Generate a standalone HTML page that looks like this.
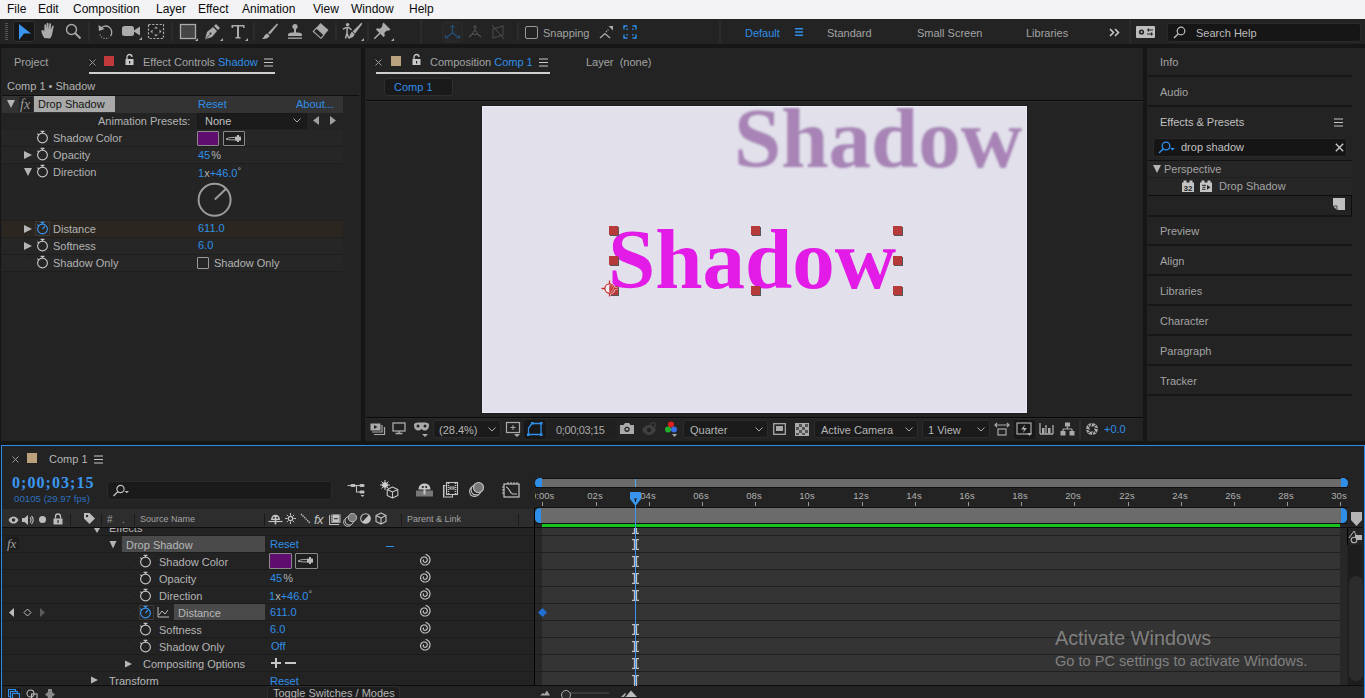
<!DOCTYPE html>
<html><head><meta charset="utf-8">
<style>
*{margin:0;padding:0;box-sizing:border-box}
html,body{width:1365px;height:698px;overflow:hidden;background:#161616;font-family:"Liberation Sans",sans-serif;font-size:11px;color:#a3a3a3;position:relative}
.a{position:absolute}
.t{position:absolute;white-space:nowrap;line-height:1}
.b{color:#2f8fe8}
.sep{position:absolute;width:1px;background:#333}
svg{position:absolute;overflow:visible}
</style></head><body>
<!-- MENU BAR -->
<div class="a" style="left:0;top:0;width:1365px;height:19px;background:#f3f3f5"></div>
<div class="t" style="left:7px;top:3px;font-size:12px;color:#0a0a0a">File</div>
<div class="t" style="left:38px;top:3px;font-size:12px;color:#0a0a0a">Edit</div>
<div class="t" style="left:73px;top:3px;font-size:12px;color:#0a0a0a">Composition</div>
<div class="t" style="left:156px;top:3px;font-size:12px;color:#0a0a0a">Layer</div>
<div class="t" style="left:198px;top:3px;font-size:12px;color:#0a0a0a">Effect</div>
<div class="t" style="left:242px;top:3px;font-size:12px;color:#0a0a0a">Animation</div>
<div class="t" style="left:313px;top:3px;font-size:12px;color:#0a0a0a">View</div>
<div class="t" style="left:351px;top:3px;font-size:12px;color:#0a0a0a">Window</div>
<div class="t" style="left:409px;top:3px;font-size:12px;color:#0a0a0a">Help</div>
<!-- TOOLBAR -->
<div class="a" style="left:0;top:19px;width:1365px;height:25px;background:#232323"></div>
<!-- grip -->
<div class="a" style="left:5px;top:23px;width:3px;height:18px;background:repeating-linear-gradient(#555 0 1px,transparent 1px 2px)"></div>
<!-- selection tool active -->
<div class="a" style="left:13px;top:21px;width:22px;height:21px;background:#171717;border:1px solid #313131;border-radius:3px"></div>
<svg style="left:0;top:0" width="1" height="1"></svg>
<svg class="ic" style="left:18px;top:23px" width="14" height="18" viewBox="0 0 14 18"><path d="M1 1 L13 10.5 L6 10.5 L1 17 Z" fill="#3a95ef"/></svg>
<!-- hand -->
<svg style="left:40px;top:22px" width="18" height="18" viewBox="0 0 17 17"><path d="M4 15 C2 12 1 9 1.5 8 C2 7.2 3.2 7.6 4 9 L4.2 3 C4.2 1.8 5.8 1.8 5.8 3 L6 7 L6.3 1.5 C6.3 0.3 8 0.3 8 1.5 L8.2 7 L8.8 2 C8.9 0.9 10.5 1 10.4 2.2 L10.2 7.5 L11.4 4 C11.7 3 13.1 3.3 12.9 4.4 L11.8 10 C11.3 13 10.5 14.5 9.5 15.5 Z" fill="#ababab"/></svg>
<!-- zoom -->
<svg style="left:65px;top:23px" width="17" height="17" viewBox="0 0 17 17"><circle cx="6.5" cy="6.5" r="5" fill="none" stroke="#ababab" stroke-width="1.4"/><path d="M10 10 L15.5 15.5" stroke="#ababab" stroke-width="1.8"/></svg>
<div class="sep" style="left:88px;top:22px;width:2px;height:19px;background:#2c2c2c"></div>
<!-- rotate -->
<svg style="left:97px;top:23px" width="17" height="17" viewBox="0 0 17 17"><path d="M3.5 5.5 A6 6 0 1 1 13.5 13" fill="none" stroke="#ababab" stroke-width="1.3"/><path d="M1.5 2 L2 8 L7.5 6 Z" fill="#ababab"/><path d="M3 11.5 A6 6 0 0 0 12 14.5" fill="none" stroke="#ababab" stroke-width="1.2" stroke-dasharray="1 1.6"/></svg>
<!-- camera -->
<svg style="left:121px;top:23px" width="21" height="18" viewBox="0 0 21 18"><rect x="1" y="3" width="12" height="10" rx="2.5" fill="#ababab"/><path d="M12 8 L19 3.5 L19 12.5 Z" fill="#ababab"/><path d="M18 17 L21 14 L21 17 Z" fill="#ababab"/></svg>
<!-- pan behind -->
<svg style="left:147px;top:23px" width="18" height="17" viewBox="0 0 18 17"><rect x="1.5" y="1.5" width="15" height="14" fill="none" stroke="#ababab" stroke-width="1.2" stroke-dasharray="2.2 1.5"/><path d="M9 3.5 L11 5.5 L7 5.5 Z M9 13.5 L11 11.5 L7 11.5 Z M3.5 8.5 L5.5 6.5 L5.5 10.5 Z M14.5 8.5 L12.5 6.5 L12.5 10.5 Z" fill="#ababab"/></svg>
<div class="sep" style="left:171px;top:22px;width:2px;height:19px;background:#2c2c2c"></div>
<!-- rect -->
<svg style="left:179px;top:23px" width="19" height="18" viewBox="0 0 19 18"><rect x="1.5" y="1.5" width="15" height="14" fill="#454545" stroke="#ababab" stroke-width="1.3"/><path d="M16 18 L19 15 L19 18 Z" fill="#ababab"/></svg>
<!-- pen -->
<svg style="left:204px;top:23px" width="19" height="18" viewBox="0 0 19 18"><path d="M1 16.5 L3 9 L9 4 L13 8 L8 14 Z" fill="#ababab"/><path d="M10 3 L12 1 L16 5 L14 7 Z" fill="#ababab"/><circle cx="6.5" cy="10.5" r="1" fill="#232323"/><path d="M1 16.5 L6 11.5" stroke="#232323" stroke-width="0.8"/><path d="M16 18 L19 15 L19 18 Z" fill="#ababab"/></svg>
<!-- text T -->
<svg style="left:230px;top:23px" width="18" height="18" viewBox="0 0 18 18"><path d="M1.5 2 L14.5 2 L14.5 5 L13 5 L13 3.5 L9 3.5 L9 14 L10.5 14 L10.5 15.5 L5.5 15.5 L5.5 14 L7 14 L7 3.5 L3 3.5 L3 5 L1.5 5 Z" fill="#ababab"/><path d="M15 18 L18 15 L18 18 Z" fill="#ababab"/></svg>
<div class="sep" style="left:253px;top:22px;width:2px;height:19px;background:#2c2c2c"></div>
<!-- brush -->
<svg style="left:261px;top:23px" width="18" height="17" viewBox="0 0 18 17"><path d="M7 10 L15.5 1 C16.5 0.3 17.3 1 16.7 2 L9 11.5 Z" fill="#ababab"/><path d="M6 10.5 L8.5 12.5 C8 15 5 16.5 1 16 C3 14.5 3.5 11.5 6 10.5 Z" fill="#ababab"/></svg>
<!-- stamp -->
<svg style="left:286px;top:23px" width="18" height="17" viewBox="0 0 18 17"><circle cx="9" cy="3.5" r="2.6" fill="#ababab"/><rect x="8" y="5" width="2" height="5" fill="#ababab"/><path d="M2 12 C2 10 4 9.5 9 9.5 C14 9.5 16 10 16 12 L16 13 L2 13 Z" fill="#ababab"/><rect x="2" y="14.5" width="14" height="1.3" fill="#ababab"/></svg>
<!-- eraser -->
<svg style="left:311px;top:22px" width="19" height="18" viewBox="0 0 19 18"><path d="M9.5 1 L17.5 8 L10 16.5 L2 9.5 Z" fill="#ababab"/><path d="M5.5 6 L13 12.8 L10 16.3 L2.3 9.5 Z" fill="#232323" stroke="#ababab" stroke-width="1.1"/></svg>
<div class="sep" style="left:335px;top:22px;width:2px;height:19px;background:#2c2c2c"></div>
<!-- puppet -->
<svg style="left:342px;top:22px" width="22" height="19" viewBox="0 0 22 19"><circle cx="5.6" cy="2.8" r="1.8" fill="#ababab"/><path d="M1 7.2 L3.5 5.8 L7.2 5.8 L9.5 8 M5.2 6 L5 11 L3.5 16.5 M5 11 L6.5 15.5 L8 16" fill="none" stroke="#ababab" stroke-width="1.5" stroke-linejoin="round"/><path d="M10.5 9.5 L18.8 1.2 C19.5 0.5 20.8 1.5 20.1 2.3 L13.2 11.5 Z" fill="#ababab"/><path d="M9.8 9.8 L12.8 12 C12 15 9.5 16.5 6 16.3 C8 14.5 8 11.5 9.8 9.8 Z" fill="#ababab"/><path d="M19 19 L22 16 L22 19 Z" fill="#ababab"/></svg>
<div class="sep" style="left:367px;top:22px;width:2px;height:19px;background:#2c2c2c"></div>
<!-- pin -->
<svg style="left:372px;top:22px" width="22" height="19" viewBox="0 0 22 19"><path d="M11.5 0.5 L18.5 7.5 L17 8.5 L14.5 8.8 L12.3 11 L12.8 14 L11.5 15 L4 7.5 L5 6.2 L8 6.7 L10.2 4.5 L10.5 2 Z" fill="#ababab"/><path d="M8 11 L2.3 16.7" stroke="#ababab" stroke-width="1.5"/><path d="M19 19 L22 16 L22 19 Z" fill="#ababab"/></svg>
<div class="sep" style="left:420px;top:20px;width:2px;height:23px;background:#2b2b2b"></div>
<!-- axis mode -->
<div class="a" style="left:442px;top:22px;width:21px;height:20px;background:#262626;border:1px solid #2c2c2c;border-radius:2px"></div>
<svg style="left:444px;top:24px" width="17" height="16" viewBox="0 0 17 16"><path d="M8.5 2 L8.5 9 M8.5 9 L2 13.5 M8.5 9 L15 13.5" stroke="#27507a" stroke-width="1.2" fill="none"/><path d="M6.5 3.5 L8.5 1 L10.5 3.5 M1.5 11 L1.5 14 L4.5 14 M12.5 14 L15.5 14 L15.5 11" stroke="#27507a" stroke-width="1" fill="none"/></svg>
<svg style="left:467px;top:24px" width="16" height="16" viewBox="0 0 16 16"><path d="M8 2 L8 7 M6 9.5 L2 13 M10 9.5 L14 13" stroke="#555" stroke-width="1.1" fill="none"/><circle cx="8" cy="8.8" r="2" fill="none" stroke="#555"/><path d="M6.3 3.5 L8 1.3 L9.7 3.5" stroke="#555" fill="none"/></svg>
<svg style="left:491px;top:24px" width="14" height="16" viewBox="0 0 14 16"><path d="M2 5 L12 2 L12 11 L2 14 Z M1 1 L13 15" stroke="#4a4a4a" stroke-width="1.1" fill="none"/></svg>
<div class="sep" style="left:517px;top:22px;width:2px;height:19px;background:#2c2c2c"></div>
<!-- snapping -->
<div class="a" style="left:525px;top:26px;width:13px;height:13px;border:1.6px solid #9a9a9a;border-radius:2px"></div>
<div class="t" style="left:543px;top:28px">Snapping</div>
<svg style="left:599px;top:25px" width="15" height="14" viewBox="0 0 15 14"><path d="M1 13 L6 8.5 L11 13" stroke="#ababab" stroke-width="1.3" fill="none"/><path d="M7 7 L10 4" stroke="#ababab" stroke-width="1.2" stroke-dasharray="1.2 1"/><path d="M9.5 1 L14 1 L14 5.5 Z" fill="#ababab"/></svg>
<svg style="left:623px;top:25px" width="14" height="14" viewBox="0 0 14 14"><path d="M1 4.5 L1 1 L4.5 1 M9.5 1 L13 1 L13 4.5 M13 9.5 L13 13 L9.5 13 M4.5 13 L1 13 L1 9.5" stroke="#2f8fe8" stroke-width="1.4" fill="none"/><path d="M4 5 L4 4 L5 4 M9 4 L10 4 L10 5 M10 9 L10 10 L9 10 M5 10 L4 10 L4 9" stroke="#2f8fe8" stroke-width="1.2" fill="none"/></svg>
<div class="sep" style="left:719px;top:20px;width:2px;height:23px;background:#2b2b2b"></div>
<div class="t b" style="left:745px;top:28px">Default</div>
<svg style="left:795px;top:28px" width="8" height="8" viewBox="0 0 8 8"><path d="M0 0.75 H8 M0 4 H8 M0 7.25 H8" stroke="#2f8fe8" stroke-width="1.3"/></svg>
<div class="t" style="left:827px;top:28px">Standard</div>
<div class="t" style="left:917px;top:28px">Small Screen</div>
<div class="t" style="left:1026px;top:28px">Libraries</div>
<svg style="left:1109px;top:28px" width="11" height="9" viewBox="0 0 11 9"><path d="M1 1 L4.5 4.5 L1 8 M6 1 L9.5 4.5 L6 8" stroke="#c8c8c8" stroke-width="1.6" fill="none"/></svg>
<div class="sep" style="left:1129px;top:20px;width:2px;height:23px;background:#2b2b2b"></div>
<svg style="left:1136px;top:26px" width="19" height="12" viewBox="0 0 19 12"><rect x="0" y="0" width="19" height="12" rx="1" fill="#bdbdbd"/><circle cx="5.5" cy="6" r="2.6" fill="#232323"/><circle cx="5.5" cy="6" r="1" fill="#bdbdbd"/><path d="M11 4 H17 M11 8 H17 M12.5 2.5 V5.5 M15.5 6.5 V9.5" stroke="#232323" stroke-width="1.2"/></svg>
<div class="a" style="left:1167px;top:23px;width:194px;height:19px;background:#161616;border:1px solid #2a2a2a;border-radius:3px"></div>
<svg style="left:1173px;top:26px" width="13" height="13" viewBox="0 0 13 13"><circle cx="8" cy="5" r="3.8" fill="none" stroke="#bdbdbd" stroke-width="1.2"/><path d="M5.3 7.7 L1 12" stroke="#bdbdbd" stroke-width="1.4"/></svg>
<div class="t" style="left:1196px;top:28px;color:#bdbdbd">Search Help</div>

<!-- LEFT PANEL -->
<div class="a" style="left:1px;top:48px;width:360px;height:393px;background:#232323"></div>
<div class="t" style="left:14px;top:57px">Project</div>
<svg style="left:89px;top:59px" width="7" height="7" viewBox="0 0 7 7"><path d="M0.5 0.5 L6.5 6.5 M6.5 0.5 L0.5 6.5" stroke="#9a9a9a" stroke-width="1"/></svg>
<div class="a" style="left:104px;top:56px;width:10px;height:10px;background:#c0393b"></div>
<svg style="left:125px;top:54px" width="9" height="11" viewBox="0 0 9 11"><path d="M2 5 V3 A2.5 2.5 0 0 1 7 3" fill="none" stroke="#c8c8c8" stroke-width="1.3"/><rect x="0.5" y="5" width="8" height="6" fill="#c8c8c8"/><rect x="4" y="7" width="1.2" height="2.5" fill="#232323"/></svg>
<div class="t" style="left:143px;top:57px">Effect Controls <span class="b">Shadow</span></div>
<svg style="left:264px;top:58px" width="9" height="9" viewBox="0 0 9 9"><path d="M0 1 H9 M0 4.5 H9 M0 8 H9" stroke="#c8c8c8" stroke-width="1.2"/></svg>
<div class="a" style="left:89px;top:72px;width:186px;height:2px;background:#cfcfcf"></div>
<div class="t" style="left:7px;top:81px;color:#b3b3b3">Comp 1 &bull; Shadow</div>
<div class="a" style="left:2px;top:95px;width:357px;height:1px;background:#0f0f0f"></div>
<!-- Drop Shadow header row -->
<div class="a" style="left:2px;top:96px;width:341px;height:17px;background:#333333"></div>
<svg style="left:7px;top:100px" width="8" height="8" viewBox="0 0 8 8"><path d="M0 0 L8 0 L4 8 Z" fill="#b5b5b5"/></svg>
<div class="a" style="left:19px;top:97px;width:14px;height:15px;background:#222"></div>
<div class="t" style="left:20px;top:98px;font-family:'Liberation Serif',serif;font-style:italic;font-size:14px;color:#9a9a9a">fx</div>
<div class="a" style="left:34px;top:96px;width:81px;height:16px;background:#a9a9a9"></div>
<div class="t" style="left:38px;top:99px;color:#141414">Drop Shadow</div>
<div class="t b" style="left:198px;top:99px">Reset</div>
<div class="t b" style="left:296px;top:99px">About...</div>
<!-- anim presets -->
<div class="t" style="left:98px;top:116px;color:#b3b3b3">Animation Presets:</div>
<div class="a" style="left:197px;top:113px;width:110px;height:16px;background:#1b1b1b;border:1px solid #191919"></div>
<div class="t" style="left:205px;top:116px;color:#c0c0c0">None</div>
<svg style="left:293px;top:118px" width="8" height="5" viewBox="0 0 8 5"><path d="M0.5 0.5 L4 4 L7.5 0.5" stroke="#aaa" fill="none" stroke-width="1"/></svg>
<svg style="left:313px;top:116px" width="6" height="9" viewBox="0 0 6 9"><path d="M6 0 L0 4.5 L6 9 Z" fill="#a0a0a0"/></svg>
<svg style="left:330px;top:116px" width="6" height="9" viewBox="0 0 6 9"><path d="M0 0 L6 4.5 L0 9 Z" fill="#a0a0a0"/></svg>
<!-- property rows -->
<div class="a" style="left:2px;top:130px;width:341px;height:16px;background:#262626"></div>
<div class="a" style="left:2px;top:146px;width:341px;height:1px;background:#1e1e1e"></div>
<div class="a" style="left:2px;top:147px;width:341px;height:16px;background:#262626"></div>
<div class="a" style="left:2px;top:163px;width:341px;height:1px;background:#1e1e1e"></div>
<div class="a" style="left:2px;top:164px;width:341px;height:56px;background:#242424"></div>
<div class="a" style="left:2px;top:220px;width:341px;height:1px;background:#1f1f1f"></div>
<div class="a" style="left:2px;top:221px;width:341px;height:16px;background:#2b2720"></div>
<div class="a" style="left:2px;top:237px;width:341px;height:1px;background:#1e1e1e"></div>
<div class="a" style="left:2px;top:238px;width:341px;height:16px;background:#262626"></div>
<div class="a" style="left:2px;top:254px;width:341px;height:1px;background:#1e1e1e"></div>
<div class="a" style="left:2px;top:255px;width:341px;height:16px;background:#262626"></div>
<div class="a" style="left:2px;top:271px;width:341px;height:1px;background:#1e1e1e"></div>
<div class="a" style="left:26px;top:138px;width:1px;height:1px;background:#3c3c3c"></div><svg style="left:36px;top:130px" width="13" height="14" viewBox="0 0 13 14"><circle cx="6.5" cy="8" r="4.9" fill="none" stroke="#c4c4c4" stroke-width="1.15"/><path d="M4.6 1.3 H8.4 M6.5 1.3 V3.2 M1.4 3.6 L2.9 5" stroke="#c4c4c4" stroke-width="1.15"/></svg><div class="t" style="left:53px;top:133px;color:#b3b3b3">Shadow Color</div>
<div class="a" style="left:197px;top:131px;width:22px;height:15px;background:#5f0e6f;border:1px solid #8a8a8a;border-radius:1px"></div>
<div class="a" style="left:223px;top:131px;width:22px;height:15px;background:#1e1e1e;border:1px solid #8a8a8a;border-radius:1px"></div>
<svg style="left:225px;top:134px" width="18" height="9" viewBox="0 0 18 9"><path d="M1 5 C4 3 8 3.5 13 3.5 L13 5.8 C8 6 4 6 1 5.3" fill="none" stroke="#bbb" stroke-width="0.9"/><rect x="10" y="2.6" width="6" height="4" fill="#bbb"/><rect x="12" y="1" width="2" height="7" fill="#bbb"/></svg>
<svg style="left:24px;top:151px" width="8" height="8" viewBox="0 0 8 8"><path d="M0 0 L8 4 L0 8 Z" fill="#b5b5b5"/></svg><svg style="left:36px;top:147px" width="13" height="14" viewBox="0 0 13 14"><circle cx="6.5" cy="8" r="4.9" fill="none" stroke="#c4c4c4" stroke-width="1.15"/><path d="M4.6 1.3 H8.4 M6.5 1.3 V3.2 M1.4 3.6 L2.9 5" stroke="#c4c4c4" stroke-width="1.15"/></svg><div class="t" style="left:53px;top:150px;color:#b3b3b3">Opacity</div>
<div class="t b" style="left:198px;top:150px">45 <span style="color:#b3b3b3;margin-left:-2px">%</span></div>
<svg style="left:24px;top:168px" width="8" height="8" viewBox="0 0 8 8"><path d="M0 0 L8 0 L4 8 Z" fill="#b5b5b5"/></svg><svg style="left:36px;top:164px" width="13" height="14" viewBox="0 0 13 14"><circle cx="6.5" cy="8" r="4.9" fill="none" stroke="#c4c4c4" stroke-width="1.15"/><path d="M4.6 1.3 H8.4 M6.5 1.3 V3.2 M1.4 3.6 L2.9 5" stroke="#c4c4c4" stroke-width="1.15"/></svg><div class="t" style="left:53px;top:167px;color:#b3b3b3">Direction</div>
<div class="t b" style="left:198px;top:167px">1<span style="color:#b3b3b3">x</span>+46.0<span style="color:#b3b3b3;font-size:9px;vertical-align:3px">&deg;</span></div>
<svg style="left:197px;top:183px" width="35" height="35" viewBox="0 0 35 35"><circle cx="17.6" cy="16.8" r="16" fill="none" stroke="#9c9c9c" stroke-width="2"/><path d="M17.8 16.4 L29.3 5.6" stroke="#9c9c9c" stroke-width="2"/></svg>
<svg style="left:24px;top:225px" width="8" height="8" viewBox="0 0 8 8"><path d="M0 0 L8 4 L0 8 Z" fill="#b5b5b5"/></svg><div class="a" style="left:35px;top:221px;width:15px;height:15px;border:1px solid #3a3a3a"></div><svg style="left:36px;top:221px" width="13" height="14" viewBox="0 0 13 14"><circle cx="6.5" cy="8" r="4.9" fill="none" stroke="#3a95ef" stroke-width="1.15"/><path d="M4.6 1.3 H8.4 M6.5 1.3 V3.2 M1.4 3.6 L2.9 5" stroke="#3a95ef" stroke-width="1.15"/><path d="M6.5 8 L9 5.2" stroke="#3a95ef" stroke-width="1.2"/></svg><div class="t" style="left:53px;top:224px;color:#b3b3b3">Distance</div>
<div class="t b" style="left:198px;top:223px">611.0</div>
<svg style="left:24px;top:242px" width="8" height="8" viewBox="0 0 8 8"><path d="M0 0 L8 4 L0 8 Z" fill="#b5b5b5"/></svg><svg style="left:36px;top:238px" width="13" height="14" viewBox="0 0 13 14"><circle cx="6.5" cy="8" r="4.9" fill="none" stroke="#c4c4c4" stroke-width="1.15"/><path d="M4.6 1.3 H8.4 M6.5 1.3 V3.2 M1.4 3.6 L2.9 5" stroke="#c4c4c4" stroke-width="1.15"/></svg><div class="t" style="left:53px;top:241px;color:#b3b3b3">Softness</div>
<div class="t b" style="left:198px;top:240px">6.0</div>
<div class="a" style="left:26px;top:263px;width:1px;height:1px;background:#3c3c3c"></div><svg style="left:36px;top:255px" width="13" height="14" viewBox="0 0 13 14"><circle cx="6.5" cy="8" r="4.9" fill="none" stroke="#c4c4c4" stroke-width="1.15"/><path d="M4.6 1.3 H8.4 M6.5 1.3 V3.2 M1.4 3.6 L2.9 5" stroke="#c4c4c4" stroke-width="1.15"/></svg><div class="t" style="left:53px;top:258px;color:#b3b3b3">Shadow Only</div>
<div class="a" style="left:197px;top:257px;width:12px;height:12px;border:1.5px solid #9a9a9a;border-radius:1px"></div>
<div class="t" style="left:214px;top:258px;color:#b3b3b3">Shadow Only</div>
<!-- COMP PANEL -->
<div class="a" style="left:365px;top:48px;width:778px;height:393px;background:#232323"></div>
<svg style="left:375px;top:59px" width="7" height="7" viewBox="0 0 7 7"><path d="M0.5 0.5 L6.5 6.5 M6.5 0.5 L0.5 6.5" stroke="#9a9a9a" stroke-width="1"/></svg>
<div class="a" style="left:391px;top:56px;width:10px;height:10px;background:#b9a27c"></div>
<svg style="left:412px;top:54px" width="9" height="11" viewBox="0 0 9 11"><path d="M2 5 V3 A2.5 2.5 0 0 1 7 3" fill="none" stroke="#c8c8c8" stroke-width="1.3"/><rect x="0.5" y="5" width="8" height="6" fill="#c8c8c8"/><rect x="4" y="7" width="1.2" height="2.5" fill="#232323"/></svg>
<div class="t" style="left:430px;top:57px">Composition <span class="b">Comp 1</span></div>
<svg style="left:539px;top:58px" width="9" height="9" viewBox="0 0 9 9"><path d="M0 1 H9 M0 4.5 H9 M0 8 H9" stroke="#c8c8c8" stroke-width="1.2"/></svg>
<div class="a" style="left:376px;top:72px;width:174px;height:2px;background:#cfcfcf"></div>
<div class="t" style="left:586px;top:57px">Layer &nbsp;(none)</div>
<div class="a" style="left:384px;top:78px;width:69px;height:18px;background:#1a1a1a;border:1px solid #2f2f2f;border-radius:3px"></div>
<div class="t b" style="left:394px;top:82px">Comp 1</div>
<div class="a" style="left:366px;top:100px;width:777px;height:1px;background:#0a0a0a"></div>
<div class="a" style="left:366px;top:101px;width:777px;height:1px;background:#2a2a2a"></div>
<!-- canvas -->
<div class="a" style="left:481px;top:105px;width:547px;height:309px;background:#1c1c1c"></div>
<div class="a" style="left:482px;top:106px;width:545px;height:307px;background:#e1e0eb;border:1px solid #ebebf7;overflow:hidden">
  <div class="t" style="left:251px;top:-11px;font-family:'Liberation Serif',serif;font-weight:bold;font-size:85px;color:#a784b5;filter:blur(1.2px)">Shadow</div>
  <div class="t" style="left:125px;top:110px;font-family:'Liberation Serif',serif;font-weight:bold;font-size:85px;color:#e21ce6">Shadow</div>
</div>
<div class="a" style="left:609px;top:226px;width:9px;height:9px;background:#b73a3a;box-shadow:1px 1px 0 #555"></div><div class="a" style="left:609px;top:256px;width:9px;height:9px;background:#b73a3a;box-shadow:1px 1px 0 #555"></div><div class="a" style="left:609px;top:286px;width:9px;height:9px;background:#b73a3a;box-shadow:1px 1px 0 #555"></div><div class="a" style="left:751px;top:226px;width:9px;height:9px;background:#b73a3a;box-shadow:1px 1px 0 #555"></div><div class="a" style="left:751px;top:286px;width:9px;height:9px;background:#b73a3a;box-shadow:1px 1px 0 #555"></div><div class="a" style="left:893px;top:226px;width:9px;height:9px;background:#b73a3a;box-shadow:1px 1px 0 #555"></div><div class="a" style="left:893px;top:256px;width:9px;height:9px;background:#b73a3a;box-shadow:1px 1px 0 #555"></div><div class="a" style="left:893px;top:286px;width:9px;height:9px;background:#b73a3a;box-shadow:1px 1px 0 #555"></div>
<svg style="left:601px;top:280px" width="17" height="17" viewBox="0 0 17 17"><g stroke="#f4f4f8" stroke-width="2.6" fill="none" opacity="0.85"><circle cx="8.5" cy="8.5" r="4.6"/><path d="M8.5 0.5 V4 M8.5 13 V16.5 M0.5 8.5 H4 M13 8.5 H16.5"/></g><circle cx="8.5" cy="8.5" r="4.6" fill="rgba(255,255,255,0.5)" stroke="#c22a2a" stroke-width="1.2"/><path d="M8.5 4.8 A3.7 3.7 0 0 1 8.5 12.2 Z" fill="#c22a2a" opacity="0.8"/><path d="M8.5 0.5 V4 M8.5 13 V16.5 M0.5 8.5 H4 M13 8.5 H16.5" stroke="#c22a2a" stroke-width="1.3"/></svg>
<!-- comp bottom bar -->
<div class="a" style="left:366px;top:417px;width:777px;height:1px;background:#080808"></div>
<div class="a" style="left:366px;top:418px;width:777px;height:1px;background:#2a2a2a"></div>
<svg style="left:370px;top:423px" width="15" height="13" viewBox="0 0 15 13"><rect x="0.5" y="0.5" width="10" height="7" fill="#aaa"/><path d="M4 2 L7.5 4 L4 6 Z" fill="#232323"/><path d="M2 9 H12 V2 M4 11.5 H14.5 V4" stroke="#aaa" stroke-width="1.2" fill="none"/></svg>
<svg style="left:392px;top:422px" width="14" height="13" viewBox="0 0 14 13"><rect x="1" y="1" width="12" height="8" fill="none" stroke="#aaa" stroke-width="1.3"/><path d="M7 9 V11 M3.5 11.5 H10.5" stroke="#aaa" stroke-width="1.3"/></svg>
<svg style="left:413px;top:421px" width="17" height="17" viewBox="0 0 17 17"><path d="M1 4 C1 2 3 1.5 8.5 1.5 C14 1.5 16 2 16 4 C16 8 14 9.5 11.5 9.5 C9.5 9.5 9 8 8.5 8 C8 8 7.5 9.5 5.5 9.5 C3 9.5 1 8 1 4 Z" fill="#aaa"/><circle cx="5" cy="5" r="1.5" fill="#232323"/><circle cx="12" cy="5" r="1.5" fill="#232323"/><path d="M9 13 H15 L12 16 Z" fill="#aaa"/></svg>
<div class="a" style="left:433px;top:420px;width:68px;height:18px;background:#1b1b1b;border:1px solid #2c2c2c;border-radius:3px"></div>
<div class="t" style="left:439px;top:425px;color:#b5b5b5">(28.4%)</div>
<svg style="left:488px;top:427px" width="8" height="5" viewBox="0 0 8 5"><path d="M0.5 0.5 L4 4 L7.5 0.5" stroke="#aaa" fill="none" stroke-width="1"/></svg>
<svg style="left:505px;top:421px" width="17" height="17" viewBox="0 0 17 17"><rect x="1.5" y="1.5" width="13" height="10" fill="none" stroke="#aaa" stroke-width="1.2"/><path d="M8 4 V9 M5.5 6.5 H10.5" stroke="#aaa"/><path d="M9 13 H15 L12 16 Z" fill="#aaa"/></svg>
<div class="a" style="left:524px;top:420px;width:22px;height:19px;background:#181818;border-radius:3px"></div>
<svg style="left:527px;top:422px" width="16" height="14" viewBox="0 0 16 14"><path d="M5 1.5 L14 1.5 L14 12.5 L1.5 12.5 L1.5 6 Z" fill="none" stroke="#2f8fe8" stroke-width="1.3"/><rect x="4" y="0" width="2.5" height="2.5" fill="#2f8fe8"/><rect x="13" y="0" width="2.5" height="2.5" fill="#2f8fe8"/><rect x="0" y="11.5" width="2.5" height="2.5" fill="#2f8fe8"/><rect x="13" y="11.5" width="2.5" height="2.5" fill="#2f8fe8"/></svg>
<div class="a" style="left:547px;top:419px;width:70px;height:20px;background:#202020"></div>
<div class="t" style="left:556px;top:425px;color:#a8a8a8;letter-spacing:-0.35px">0;00;03;15</div>
<svg style="left:619px;top:422px" width="16" height="13" viewBox="0 0 16 13"><path d="M1 3 H4.5 L6 1 H10 L11.5 3 H15 V12 H1 Z" fill="#aaa"/><circle cx="8" cy="7.3" r="2.6" fill="#232323"/><circle cx="8" cy="7.3" r="1.3" fill="#aaa"/></svg>
<svg style="left:641px;top:422px" width="16" height="14" viewBox="0 0 16 14"><path d="M1 8 C3 4 6 3 8 3 C10 3 13 4 15 8 C13 12 10 13 8 13 C6 13 3 12 1 8 Z" fill="#3f3f3f"/><circle cx="8" cy="8" r="2.2" fill="#232323"/><circle cx="12" cy="3" r="2.5" fill="none" stroke="#3f3f3f" stroke-width="1.2"/></svg>
<svg style="left:664px;top:421px" width="15" height="17" viewBox="0 0 15 17"><circle cx="7" cy="3.5" r="3" fill="#e02020"/><circle cx="4" cy="8.5" r="3" fill="#20b030"/><circle cx="10" cy="8.5" r="3" fill="#3a6ee8"/><path d="M8 13 H13 L10.5 16 Z" fill="#aaa"/></svg>
<div class="a" style="left:683px;top:420px;width:85px;height:18px;background:#1b1b1b;border:1px solid #2c2c2c;border-radius:3px"></div>
<div class="t" style="left:690px;top:425px;color:#b5b5b5">Quarter</div>
<svg style="left:755px;top:427px" width="8" height="5" viewBox="0 0 8 5"><path d="M0.5 0.5 L4 4 L7.5 0.5" stroke="#aaa" fill="none" stroke-width="1"/></svg>
<svg style="left:773px;top:423px" width="13" height="12" viewBox="0 0 13 12"><rect x="0.7" y="0.7" width="11.6" height="10.6" fill="none" stroke="#aaa" stroke-width="1.3"/><rect x="3" y="3" width="7" height="5" fill="#aaa"/></svg>
<svg style="left:795px;top:423px" width="14" height="13" viewBox="0 0 14 13"><rect x="0.5" y="0.5" width="13" height="12" fill="#555" stroke="#aaa" stroke-width="1"/><path d="M1 1 H4 V4 H1 Z M7 1 H10 V4 H7 Z M4 4 H7 V7 H4 Z M10 4 H13 V7 H10 Z M1 7 H4 V10 H1 Z M7 7 H10 V10 H7 Z M4 10 H7 V12 H4 Z M10 10 H13 V12 H10 Z" fill="#aaa"/></svg>
<div class="a" style="left:814px;top:420px;width:104px;height:18px;background:#1b1b1b;border:1px solid #2c2c2c;border-radius:3px"></div>
<div class="t" style="left:821px;top:425px;color:#b5b5b5">Active Camera</div>
<svg style="left:905px;top:427px" width="8" height="5" viewBox="0 0 8 5"><path d="M0.5 0.5 L4 4 L7.5 0.5" stroke="#aaa" fill="none" stroke-width="1"/></svg>
<div class="a" style="left:922px;top:420px;width:68px;height:18px;background:#1b1b1b;border:1px solid #2c2c2c;border-radius:3px"></div>
<div class="t" style="left:928px;top:425px;color:#b5b5b5">1 View</div>
<svg style="left:977px;top:427px" width="8" height="5" viewBox="0 0 8 5"><path d="M0.5 0.5 L4 4 L7.5 0.5" stroke="#aaa" fill="none" stroke-width="1"/></svg>
<svg style="left:994px;top:422px" width="16" height="14" viewBox="0 0 16 14"><path d="M1 3 H15 M3 1 L1 3 L3 5 M13 1 L15 3 L13 5" stroke="#aaa" fill="none" stroke-width="1.2"/><rect x="4" y="7" width="8" height="6" fill="none" stroke="#aaa" stroke-width="1.2"/></svg>
<div class="a" style="left:1014px;top:420px;width:21px;height:19px;background:#181818;border-radius:2px"></div>
<svg style="left:1016px;top:422px" width="17" height="15" viewBox="0 0 17 15"><rect x="1" y="1" width="14" height="11" fill="none" stroke="#aaa" stroke-width="1.2"/><path d="M9 2.5 L5 7.5 H8 L7 11 L11 6 H8 Z" fill="#aaa"/><path d="M11 11 H16 L13.5 14 Z" fill="#aaa"/></svg>
<svg style="left:1039px;top:422px" width="15" height="13" viewBox="0 0 15 13"><path d="M1 12 H14 M1 1 V12 M14 3 V12 M4 6 V12 M7 3 V12 M10 6 V12" stroke="#aaa" stroke-width="1.3"/><rect x="3" y="6" width="2.5" height="5" fill="#aaa"/><rect x="9" y="6" width="2.5" height="5" fill="#aaa"/></svg>
<svg style="left:1060px;top:422px" width="15" height="14" viewBox="0 0 15 14"><rect x="5" y="0.5" width="5" height="4" fill="#aaa"/><path d="M7.5 4.5 V7 M3 7 H12 M3 7 V9 M12 7 V9" stroke="#aaa" stroke-width="1.2"/><rect x="0.5" y="9" width="5" height="4.5" fill="#aaa"/><rect x="9.5" y="9" width="5" height="4.5" fill="#aaa"/></svg>
<div class="sep" style="left:1079px;top:420px;width:2px;height:19px;background:#2e2e2e"></div>
<svg style="left:1085px;top:422px" width="14" height="14" viewBox="0 0 14 14"><circle cx="7" cy="7" r="6" fill="#aaa"/><circle cx="7" cy="7" r="2.5" fill="#232323"/><path d="M7 1 L5.5 5 M13 7 L9 5.5 M7 13 L8.5 9 M1 7 L5 8.5 M2.8 2.8 L5 6 M11.2 2.8 L8 5 M11.2 11.2 L9 8 M2.8 11.2 L6 9" stroke="#232323" stroke-width="1"/></svg>
<div class="t b" style="left:1104px;top:424px">+0.0</div>
<!-- RIGHT PANEL -->
<div class="a" style="left:1147px;top:48px;width:218px;height:393px;background:#232323"></div>
<div class="t" style="left:1160px;top:57px">Info</div>
<div class="a" style="left:1148px;top:75px;width:204px;height:2px;background:#161616"></div>
<div class="t" style="left:1160px;top:87px">Audio</div>
<div class="a" style="left:1148px;top:105px;width:204px;height:2px;background:#161616"></div>
<div class="t" style="left:1160px;top:117px;color:#c0c0c0">Effects &amp; Presets</div>
<svg style="left:1334px;top:118px" width="9" height="9" viewBox="0 0 9 9"><path d="M0 1 H9 M0 4.5 H9 M0 8 H9" stroke="#c8c8c8" stroke-width="1.2"/></svg>
<div class="a" style="left:1153px;top:138px;width:194px;height:19px;background:#151515;border:1px solid #2a2a2a;border-radius:3px"></div>
<svg style="left:1158px;top:141px" width="18" height="13" viewBox="0 0 18 13"><circle cx="8" cy="5" r="3.8" fill="none" stroke="#2f8fe8" stroke-width="1.3"/><path d="M5.3 7.7 L1 12" stroke="#2f8fe8" stroke-width="1.5"/><path d="M12 7 H17 L14.5 9.5 Z" fill="#2f8fe8"/></svg>
<div class="t" style="left:1181px;top:142px;color:#c0c0c0">drop shadow</div>
<svg style="left:1335px;top:143px" width="9" height="9" viewBox="0 0 9 9"><path d="M0.8 0.8 L8.2 8.2 M8.2 0.8 L0.8 8.2" stroke="#c8c8c8" stroke-width="1.4"/></svg>
<div class="a" style="left:1148px;top:160px;width:204px;height:1px;background:#111"></div>
<div class="a" style="left:1148px;top:161px;width:204px;height:16px;background:#262626"></div>
<div class="a" style="left:1148px;top:177px;width:204px;height:1px;background:#1f1f1f"></div>
<div class="a" style="left:1148px;top:178px;width:204px;height:17px;background:#262626"></div>
<svg style="left:1153px;top:165px" width="8" height="8" viewBox="0 0 8 8"><path d="M0 0 L8 0 L4 8 Z" fill="#b5b5b5"/></svg>
<div class="t" style="left:1164px;top:164px">Perspective</div>
<svg style="left:1182px;top:180px" width="12" height="12" viewBox="0 0 12 12"><path d="M0 2.5 H1.5 V0.5 H4.5 V2.5 H7.5 V0.5 H10.5 V2.5 H12 V12 H0 Z" fill="#c4c4c4"/><text x="6" y="10.8" font-size="8" font-family="Liberation Sans" font-weight="bold" text-anchor="middle" fill="#262626">32</text></svg>
<svg style="left:1200px;top:180px" width="12" height="12" viewBox="0 0 12 12"><path d="M0 2.5 H1.5 V0.5 H4.5 V2.5 H7.5 V0.5 H10.5 V2.5 H12 V12 H0 Z" fill="#c4c4c4"/><path d="M2 5.3 H6 M2.5 7.3 H5.5 M2 9.3 H5.5" stroke="#262626" stroke-width="1"/><path d="M7 5 L10.5 7.3 L7 9.8 Z" fill="#262626"/></svg>
<div class="t" style="left:1219px;top:181px">Drop Shadow</div>
<div class="a" style="left:1148px;top:195px;width:204px;height:1px;background:#0d0d0d"></div>
<div class="a" style="left:1351px;top:196px;width:1px;height:19px;background:#0d0d0d"></div>
<svg style="left:1333px;top:198px" width="12" height="12" viewBox="0 0 12 12"><path d="M0 0 H12 V12 H4 L0 8 Z" fill="#c0c0c0"/><path d="M0 8 H4 V12" fill="none" stroke="#232323" stroke-width="0.8"/></svg>
<div class="a" style="left:1148px;top:215px;width:204px;height:2px;background:#161616"></div>
<div class="t" style="left:1160px;top:226px">Preview</div>
<div class="a" style="left:1148px;top:244px;width:204px;height:2px;background:#161616"></div>
<div class="t" style="left:1160px;top:256px">Align</div>
<div class="a" style="left:1148px;top:274px;width:204px;height:2px;background:#161616"></div>
<div class="t" style="left:1160px;top:286px">Libraries</div>
<div class="a" style="left:1148px;top:304px;width:204px;height:2px;background:#161616"></div>
<div class="t" style="left:1160px;top:316px">Character</div>
<div class="a" style="left:1148px;top:334px;width:204px;height:2px;background:#161616"></div>
<div class="t" style="left:1160px;top:346px">Paragraph</div>
<div class="a" style="left:1148px;top:364px;width:204px;height:2px;background:#161616"></div>
<div class="t" style="left:1160px;top:376px">Tracker</div>
<div class="a" style="left:1148px;top:394px;width:204px;height:2px;background:#161616"></div>
<!-- TIMELINE -->
<div class="a" style="left:1px;top:445px;width:1364px;height:253px;background:#232323;border:1px solid #2d8ceb;border-bottom:none"></div>
<svg style="left:12px;top:456px" width="7" height="7" viewBox="0 0 7 7"><path d="M0.5 0.5 L6.5 6.5 M6.5 0.5 L0.5 6.5" stroke="#9a9a9a" stroke-width="1"/></svg>
<div class="a" style="left:27px;top:453px;width:10px;height:10px;background:#b9a27c"></div>
<div class="t" style="left:49px;top:454px;color:#b5b5b5">Comp 1</div>
<svg style="left:94px;top:455px" width="9" height="9" viewBox="0 0 9 9"><path d="M0 1 H9 M0 4.5 H9 M0 8 H9" stroke="#c8c8c8" stroke-width="1.2"/></svg>
<div class="t" style="left:12px;top:475px;font-size:16px;font-weight:bold;color:#3a97f0;font-family:'Liberation Serif',serif;letter-spacing:1.05px">0;00;03;15</div>
<div class="t" style="left:14px;top:494px;font-size:9.7px;color:#2b6fbd">00105 (29.97 fps)</div>
<div class="a" style="left:107px;top:481px;width:225px;height:19px;background:#1a1a1a;border:1px solid #2a2a2a;border-radius:3px"></div>
<svg style="left:112px;top:484px" width="18" height="13" viewBox="0 0 18 13"><circle cx="8.5" cy="5" r="3.6" fill="none" stroke="#bdbdbd" stroke-width="1.2"/><path d="M6 7.6 L1.5 12" stroke="#bdbdbd" stroke-width="1.4"/><path d="M12.5 7 H17 L14.75 9.3 Z" fill="#bdbdbd"/></svg>
<!-- timeline top icons -->
<svg style="left:347px;top:483px" width="19" height="15" viewBox="0 0 19 15"><path d="M0.5 2.5 H13 M9.5 2.5 V9 H13" stroke="#bdbdbd" stroke-width="1.1" fill="none"/><rect x="3.5" y="1" width="5" height="3" rx="1.2" fill="#bdbdbd"/><rect x="12.5" y="1" width="5" height="3" rx="1.2" fill="#bdbdbd"/><rect x="12.5" y="7.5" width="5" height="3" rx="1.2" fill="#bdbdbd"/><path d="M13.5 12 H17.5 L15.5 14 Z" fill="#bdbdbd"/></svg>
<svg style="left:380px;top:480px" width="19" height="19" viewBox="0 0 19 19"><path d="M5 0 V10 M0 5 H10 M1.5 1.5 L8.5 8.5 M8.5 1.5 L1.5 8.5" stroke="#cfcfcf" stroke-width="1"/><circle cx="5" cy="5" r="2.8" fill="#cfcfcf"/><path d="M12.5 7 L17.8 9.5 L17.8 15.5 L12.5 18 L7.2 15.5 L7.2 9.5 Z M7.2 9.5 L12.5 12 L17.8 9.5 M12.5 12 V18" fill="#232323" stroke="#c4c4c4" stroke-width="1.1" stroke-linejoin="round"/></svg>
<svg style="left:416px;top:482px" width="17" height="15" viewBox="0 0 17 15"><path d="M2.5 7.5 C2.5 3.5 5.2 1.5 8.5 1.5 C11.8 1.5 14.5 3.5 14.5 7.5 Z" fill="#c4c4c4"/><circle cx="6.8" cy="5" r="1.1" fill="#232323"/><circle cx="10.2" cy="5" r="1.1" fill="#232323"/><rect x="0" y="8.5" width="17" height="6" fill="#777"/><rect x="7.5" y="6" width="2" height="6.5" fill="#c4c4c4"/></svg>
<svg style="left:442px;top:482px" width="16" height="16" viewBox="0 0 16 16"><path d="M3.5 3.5 H1.5 V15 H10.5 V13" fill="none" stroke="#c4c4c4" stroke-width="1.1"/><path d="M1.5 5 H3 M1.5 7 H3 M1.5 9 H3 M1.5 11 H3 M1.5 13 H3" stroke="#c4c4c4" stroke-width="0.9"/><rect x="4.5" y="0.5" width="11" height="12" fill="#232323" stroke="#c4c4c4" stroke-width="1.1"/><path d="M6.5 1 V12 M13.5 1 V12" stroke="#c4c4c4" stroke-width="1.6" stroke-dasharray="1 1"/><rect x="7.5" y="4.5" width="5" height="3" fill="#c4c4c4"/><rect x="8.5" y="5.5" width="3" height="1" fill="#232323"/></svg>
<svg style="left:469px;top:482px" width="15" height="16" viewBox="0 0 15 16"><path d="M4.5 4.5 A5 5 0 1 0 10.5 10.5" fill="#232323" stroke="#c4c4c4" stroke-width="1.1"/><path d="M6 3 A5 5 0 1 0 12 9" fill="#232323" stroke="#c4c4c4" stroke-width="1.1"/><circle cx="9.5" cy="5.5" r="5" fill="#777" stroke="#c4c4c4" stroke-width="1.1"/></svg>
<svg style="left:502px;top:481px" width="18" height="17" viewBox="0 0 18 17"><rect x="2" y="3" width="15" height="13" fill="none" stroke="#c4c4c4" stroke-width="1.2"/><path d="M6 1 V3 M9 1 V3 M12 1 V3 M15 1 V3 M0 6 H2 M0 9 H2 M0 12 H2" stroke="#c4c4c4" stroke-width="1"/><path d="M4 6 C7 6 8 13 11 13 L15 13" fill="none" stroke="#c4c4c4" stroke-width="1.1"/></svg>

<div class="a" style="left:2px;top:528px;width:532px;height:157px;background:#232323"></div>
<div class="a" style="left:2px;top:535px;width:532px;height:1px;background:#1c1c1c"></div>
<div class="a" style="left:2px;top:552px;width:532px;height:1px;background:#1c1c1c"></div>
<div class="a" style="left:2px;top:569px;width:532px;height:1px;background:#1c1c1c"></div>
<div class="a" style="left:2px;top:586px;width:532px;height:1px;background:#1c1c1c"></div>
<div class="a" style="left:2px;top:603px;width:532px;height:1px;background:#1c1c1c"></div>
<div class="a" style="left:2px;top:620px;width:532px;height:1px;background:#1c1c1c"></div>
<div class="a" style="left:2px;top:637px;width:532px;height:1px;background:#1c1c1c"></div>
<div class="a" style="left:2px;top:654px;width:532px;height:1px;background:#1c1c1c"></div>
<div class="a" style="left:2px;top:671px;width:532px;height:1px;background:#1c1c1c"></div>
<div class="a" style="left:2px;top:685px;width:1361px;height:1px;background:#0d0d0d"></div>
<div class="t" style="left:109px;top:523px;color:#b5b5b5">Effects</div>
<svg style="left:94px;top:528px" width="6" height="5" viewBox="0 0 6 5"><path d="M0 0 H6 L3 5 Z" fill="#b5b5b5"/></svg>
<div class="a" style="left:6px;top:537px;width:13px;height:13px;background:#1c1c1c"></div>
<div class="t" style="left:7px;top:537px;font-family:'Liberation Serif',serif;font-style:italic;font-size:13px;color:#a0a0a0">fx</div>
<svg style="left:109px;top:541px" width="8" height="8" viewBox="0 0 8 8"><path d="M0.5 0 L7.5 0 L4 7.5 Z" fill="#b5b5b5"/></svg>
<div class="a" style="left:122px;top:536px;width:143px;height:16px;background:#4a4a4a"></div>
<div class="t" style="left:126px;top:540px;color:#b8b8b8">Drop Shadow</div>
<div class="t b" style="left:270px;top:539px">Reset</div>
<div class="a" style="left:386px;top:546px;width:8px;height:1px;background:#2f8fe8"></div>
<div class="a" style="left:129px;top:561px;width:1px;height:1px;background:#3a3a3a"></div>
<svg style="left:139px;top:554px" width="13" height="14" viewBox="0 0 13 14"><circle cx="6.5" cy="8" r="4.9" fill="none" stroke="#c4c4c4" stroke-width="1.15"/><path d="M4.6 1.3 H8.4 M6.5 1.3 V3.2 M1.4 3.6 L2.9 5" stroke="#c4c4c4" stroke-width="1.15"/></svg>
<div class="t" style="left:159px;top:557px;color:#b5b5b5">Shadow Color</div>
<svg style="left:418px;top:554px" width="14" height="14" viewBox="0 0 14 14"><path d="M7.64 0.39 L8.63 0.73 L9.52 1.24 L10.31 1.88 L10.96 2.64 L11.47 3.49 L11.81 4.40 L11.99 5.35 L11.99 6.30 L11.84 7.22 L11.53 8.09 L11.07 8.88 L10.50 9.57 L9.82 10.14 L9.07 10.58 L8.26 10.87 L7.43 11.02 L6.60 11.01 L5.79 10.87 L5.04 10.59 L4.36 10.18 L3.77 9.68 L3.28 9.09 L2.91 8.43 L2.67 7.73 L2.56 7.01 L2.57 6.30 L2.71 5.61 L2.96 4.97 L3.31 4.40 L3.74 3.90 L4.25 3.50 L4.81 3.20 L5.40 3.01 L6.01 2.93 L6.60 2.95 L7.17 3.08 L7.69 3.30 L8.16 3.60 L8.56 3.97 L8.87 4.39 L9.11 4.85 L9.25 5.34 L9.30 5.82 L9.27 6.30 L9.15 6.75 L8.96 7.16 L8.71 7.52 L8.41 7.82 L8.07 8.05 L7.71 8.22 L7.33 8.31 L6.96 8.33 L6.60 8.28 L6.27 8.18 L5.97 8.02 L5.72 7.82 L5.52 7.59 L5.37 7.33 L5.27 7.07 L5.23 6.80 L5.24 6.54 L5.30 6.30 L5.39 6.09 L5.52 5.91 L5.67 5.76 L5.83 5.66" fill="none" stroke="#c4c4c4" stroke-width="1.15" stroke-linejoin="round"/></svg>
<div class="a" style="left:129px;top:578px;width:1px;height:1px;background:#3a3a3a"></div>
<svg style="left:139px;top:571px" width="13" height="14" viewBox="0 0 13 14"><circle cx="6.5" cy="8" r="4.9" fill="none" stroke="#c4c4c4" stroke-width="1.15"/><path d="M4.6 1.3 H8.4 M6.5 1.3 V3.2 M1.4 3.6 L2.9 5" stroke="#c4c4c4" stroke-width="1.15"/></svg>
<div class="t" style="left:159px;top:574px;color:#b5b5b5">Opacity</div>
<svg style="left:418px;top:571px" width="14" height="14" viewBox="0 0 14 14"><path d="M7.64 0.39 L8.63 0.73 L9.52 1.24 L10.31 1.88 L10.96 2.64 L11.47 3.49 L11.81 4.40 L11.99 5.35 L11.99 6.30 L11.84 7.22 L11.53 8.09 L11.07 8.88 L10.50 9.57 L9.82 10.14 L9.07 10.58 L8.26 10.87 L7.43 11.02 L6.60 11.01 L5.79 10.87 L5.04 10.59 L4.36 10.18 L3.77 9.68 L3.28 9.09 L2.91 8.43 L2.67 7.73 L2.56 7.01 L2.57 6.30 L2.71 5.61 L2.96 4.97 L3.31 4.40 L3.74 3.90 L4.25 3.50 L4.81 3.20 L5.40 3.01 L6.01 2.93 L6.60 2.95 L7.17 3.08 L7.69 3.30 L8.16 3.60 L8.56 3.97 L8.87 4.39 L9.11 4.85 L9.25 5.34 L9.30 5.82 L9.27 6.30 L9.15 6.75 L8.96 7.16 L8.71 7.52 L8.41 7.82 L8.07 8.05 L7.71 8.22 L7.33 8.31 L6.96 8.33 L6.60 8.28 L6.27 8.18 L5.97 8.02 L5.72 7.82 L5.52 7.59 L5.37 7.33 L5.27 7.07 L5.23 6.80 L5.24 6.54 L5.30 6.30 L5.39 6.09 L5.52 5.91 L5.67 5.76 L5.83 5.66" fill="none" stroke="#c4c4c4" stroke-width="1.15" stroke-linejoin="round"/></svg>
<div class="a" style="left:129px;top:595px;width:1px;height:1px;background:#3a3a3a"></div>
<svg style="left:139px;top:588px" width="13" height="14" viewBox="0 0 13 14"><circle cx="6.5" cy="8" r="4.9" fill="none" stroke="#c4c4c4" stroke-width="1.15"/><path d="M4.6 1.3 H8.4 M6.5 1.3 V3.2 M1.4 3.6 L2.9 5" stroke="#c4c4c4" stroke-width="1.15"/></svg>
<div class="t" style="left:159px;top:591px;color:#b5b5b5">Direction</div>
<svg style="left:418px;top:588px" width="14" height="14" viewBox="0 0 14 14"><path d="M7.64 0.39 L8.63 0.73 L9.52 1.24 L10.31 1.88 L10.96 2.64 L11.47 3.49 L11.81 4.40 L11.99 5.35 L11.99 6.30 L11.84 7.22 L11.53 8.09 L11.07 8.88 L10.50 9.57 L9.82 10.14 L9.07 10.58 L8.26 10.87 L7.43 11.02 L6.60 11.01 L5.79 10.87 L5.04 10.59 L4.36 10.18 L3.77 9.68 L3.28 9.09 L2.91 8.43 L2.67 7.73 L2.56 7.01 L2.57 6.30 L2.71 5.61 L2.96 4.97 L3.31 4.40 L3.74 3.90 L4.25 3.50 L4.81 3.20 L5.40 3.01 L6.01 2.93 L6.60 2.95 L7.17 3.08 L7.69 3.30 L8.16 3.60 L8.56 3.97 L8.87 4.39 L9.11 4.85 L9.25 5.34 L9.30 5.82 L9.27 6.30 L9.15 6.75 L8.96 7.16 L8.71 7.52 L8.41 7.82 L8.07 8.05 L7.71 8.22 L7.33 8.31 L6.96 8.33 L6.60 8.28 L6.27 8.18 L5.97 8.02 L5.72 7.82 L5.52 7.59 L5.37 7.33 L5.27 7.07 L5.23 6.80 L5.24 6.54 L5.30 6.30 L5.39 6.09 L5.52 5.91 L5.67 5.76 L5.83 5.66" fill="none" stroke="#c4c4c4" stroke-width="1.15" stroke-linejoin="round"/></svg>
<div class="a" style="left:129px;top:612px;width:1px;height:1px;background:#3a3a3a"></div>
<div class="a" style="left:139px;top:605px;width:15px;height:15px;border:1px solid #3a3a3a"></div>
<svg style="left:139px;top:605px" width="13" height="14" viewBox="0 0 13 14"><circle cx="6.5" cy="8" r="4.9" fill="none" stroke="#3a95ef" stroke-width="1.15"/><path d="M4.6 1.3 H8.4 M6.5 1.3 V3.2 M1.4 3.6 L2.9 5" stroke="#3a95ef" stroke-width="1.15"/><path d="M6.5 8 L9 5.2" stroke="#3a95ef" stroke-width="1.2"/></svg>
<svg style="left:157px;top:607px" width="12" height="11" viewBox="0 0 12 11"><path d="M1 0 V10 H12" fill="none" stroke="#bdbdbd" stroke-width="1"/><path d="M2 8 L5 4 L8 7 L11 3" fill="none" stroke="#bdbdbd" stroke-width="1"/></svg>
<div class="a" style="left:174px;top:604px;width:91px;height:16px;background:#4a4a4a"></div>
<div class="t" style="left:178px;top:608px;color:#b8b8b8">Distance</div>
<svg style="left:418px;top:605px" width="14" height="14" viewBox="0 0 14 14"><path d="M7.64 0.39 L8.63 0.73 L9.52 1.24 L10.31 1.88 L10.96 2.64 L11.47 3.49 L11.81 4.40 L11.99 5.35 L11.99 6.30 L11.84 7.22 L11.53 8.09 L11.07 8.88 L10.50 9.57 L9.82 10.14 L9.07 10.58 L8.26 10.87 L7.43 11.02 L6.60 11.01 L5.79 10.87 L5.04 10.59 L4.36 10.18 L3.77 9.68 L3.28 9.09 L2.91 8.43 L2.67 7.73 L2.56 7.01 L2.57 6.30 L2.71 5.61 L2.96 4.97 L3.31 4.40 L3.74 3.90 L4.25 3.50 L4.81 3.20 L5.40 3.01 L6.01 2.93 L6.60 2.95 L7.17 3.08 L7.69 3.30 L8.16 3.60 L8.56 3.97 L8.87 4.39 L9.11 4.85 L9.25 5.34 L9.30 5.82 L9.27 6.30 L9.15 6.75 L8.96 7.16 L8.71 7.52 L8.41 7.82 L8.07 8.05 L7.71 8.22 L7.33 8.31 L6.96 8.33 L6.60 8.28 L6.27 8.18 L5.97 8.02 L5.72 7.82 L5.52 7.59 L5.37 7.33 L5.27 7.07 L5.23 6.80 L5.24 6.54 L5.30 6.30 L5.39 6.09 L5.52 5.91 L5.67 5.76 L5.83 5.66" fill="none" stroke="#c4c4c4" stroke-width="1.15" stroke-linejoin="round"/></svg>
<div class="a" style="left:129px;top:629px;width:1px;height:1px;background:#3a3a3a"></div>
<svg style="left:139px;top:622px" width="13" height="14" viewBox="0 0 13 14"><circle cx="6.5" cy="8" r="4.9" fill="none" stroke="#c4c4c4" stroke-width="1.15"/><path d="M4.6 1.3 H8.4 M6.5 1.3 V3.2 M1.4 3.6 L2.9 5" stroke="#c4c4c4" stroke-width="1.15"/></svg>
<div class="t" style="left:159px;top:625px;color:#b5b5b5">Softness</div>
<svg style="left:418px;top:622px" width="14" height="14" viewBox="0 0 14 14"><path d="M7.64 0.39 L8.63 0.73 L9.52 1.24 L10.31 1.88 L10.96 2.64 L11.47 3.49 L11.81 4.40 L11.99 5.35 L11.99 6.30 L11.84 7.22 L11.53 8.09 L11.07 8.88 L10.50 9.57 L9.82 10.14 L9.07 10.58 L8.26 10.87 L7.43 11.02 L6.60 11.01 L5.79 10.87 L5.04 10.59 L4.36 10.18 L3.77 9.68 L3.28 9.09 L2.91 8.43 L2.67 7.73 L2.56 7.01 L2.57 6.30 L2.71 5.61 L2.96 4.97 L3.31 4.40 L3.74 3.90 L4.25 3.50 L4.81 3.20 L5.40 3.01 L6.01 2.93 L6.60 2.95 L7.17 3.08 L7.69 3.30 L8.16 3.60 L8.56 3.97 L8.87 4.39 L9.11 4.85 L9.25 5.34 L9.30 5.82 L9.27 6.30 L9.15 6.75 L8.96 7.16 L8.71 7.52 L8.41 7.82 L8.07 8.05 L7.71 8.22 L7.33 8.31 L6.96 8.33 L6.60 8.28 L6.27 8.18 L5.97 8.02 L5.72 7.82 L5.52 7.59 L5.37 7.33 L5.27 7.07 L5.23 6.80 L5.24 6.54 L5.30 6.30 L5.39 6.09 L5.52 5.91 L5.67 5.76 L5.83 5.66" fill="none" stroke="#c4c4c4" stroke-width="1.15" stroke-linejoin="round"/></svg>
<div class="a" style="left:129px;top:646px;width:1px;height:1px;background:#3a3a3a"></div>
<svg style="left:139px;top:639px" width="13" height="14" viewBox="0 0 13 14"><circle cx="6.5" cy="8" r="4.9" fill="none" stroke="#c4c4c4" stroke-width="1.15"/><path d="M4.6 1.3 H8.4 M6.5 1.3 V3.2 M1.4 3.6 L2.9 5" stroke="#c4c4c4" stroke-width="1.15"/></svg>
<div class="t" style="left:159px;top:642px;color:#b5b5b5">Shadow Only</div>
<svg style="left:418px;top:639px" width="14" height="14" viewBox="0 0 14 14"><path d="M7.64 0.39 L8.63 0.73 L9.52 1.24 L10.31 1.88 L10.96 2.64 L11.47 3.49 L11.81 4.40 L11.99 5.35 L11.99 6.30 L11.84 7.22 L11.53 8.09 L11.07 8.88 L10.50 9.57 L9.82 10.14 L9.07 10.58 L8.26 10.87 L7.43 11.02 L6.60 11.01 L5.79 10.87 L5.04 10.59 L4.36 10.18 L3.77 9.68 L3.28 9.09 L2.91 8.43 L2.67 7.73 L2.56 7.01 L2.57 6.30 L2.71 5.61 L2.96 4.97 L3.31 4.40 L3.74 3.90 L4.25 3.50 L4.81 3.20 L5.40 3.01 L6.01 2.93 L6.60 2.95 L7.17 3.08 L7.69 3.30 L8.16 3.60 L8.56 3.97 L8.87 4.39 L9.11 4.85 L9.25 5.34 L9.30 5.82 L9.27 6.30 L9.15 6.75 L8.96 7.16 L8.71 7.52 L8.41 7.82 L8.07 8.05 L7.71 8.22 L7.33 8.31 L6.96 8.33 L6.60 8.28 L6.27 8.18 L5.97 8.02 L5.72 7.82 L5.52 7.59 L5.37 7.33 L5.27 7.07 L5.23 6.80 L5.24 6.54 L5.30 6.30 L5.39 6.09 L5.52 5.91 L5.67 5.76 L5.83 5.66" fill="none" stroke="#c4c4c4" stroke-width="1.15" stroke-linejoin="round"/></svg>
<div class="a" style="left:269px;top:553px;width:23px;height:16px;background:#5f0e6f;border:1px solid #8a8a8a;border-radius:1px"></div>
<div class="a" style="left:295px;top:553px;width:23px;height:16px;background:#1e1e1e;border:1px solid #8a8a8a;border-radius:1px"></div>
<svg style="left:297px;top:556px" width="18" height="9" viewBox="0 0 18 9"><path d="M1 5 C4 3 8 3.5 13 3.5 L13 5.8 C8 6 4 6 1 5.3" fill="none" stroke="#bbb" stroke-width="0.9"/><rect x="10" y="2.6" width="6" height="4" fill="#bbb"/><rect x="12" y="1" width="2" height="7" fill="#bbb"/></svg>
<div class="t b" style="left:270px;top:573px">45 <span style="color:#b3b3b3;margin-left:-2px">%</span></div>
<div class="t b" style="left:269px;top:590px">1<span style="color:#b3b3b3">x</span>+46.0<span style="color:#b3b3b3;font-size:9px;vertical-align:3px">&deg;</span></div>
<div class="t b" style="left:270px;top:607px">611.0</div>
<div class="t b" style="left:270px;top:624px">6.0</div>
<div class="t b" style="left:271px;top:641px">Off</div>
<svg style="left:8px;top:608px" width="40" height="9" viewBox="0 0 40 9"><path d="M6 0 L1 4.5 L6 9 Z" fill="#bdbdbd"/><path d="M19.5 1 L23 4.5 L19.5 8 L16 4.5 Z" fill="none" stroke="#bdbdbd" stroke-width="1"/><path d="M32 0 L37 4.5 L32 9 Z" fill="#5a5a5a"/></svg>
<svg style="left:125px;top:660px" width="7" height="8" viewBox="0 0 7 8"><path d="M0 0.5 L7 4 L0 7.5 Z" fill="#b5b5b5"/></svg>
<div class="t" style="left:143px;top:659px;color:#b5b5b5">Compositing Options</div>
<svg style="left:271px;top:658px" width="26" height="10" viewBox="0 0 26 10"><path d="M0 5 H10 M5 0 V10 M14 5 H25" stroke="#c8c8c8" stroke-width="2"/></svg>
<svg style="left:91px;top:676px" width="7" height="8" viewBox="0 0 7 8"><path d="M0 0.5 L7 4 L0 7.5 Z" fill="#b5b5b5"/></svg>
<div class="t" style="left:109px;top:676px;color:#b5b5b5">Transform</div>
<div class="t b" style="left:270px;top:676px">Reset</div>
<!-- column header -->
<div class="a" style="left:2px;top:509px;width:532px;height:18px;background:#2d2d2d"></div>
<svg style="left:8px;top:516px" width="11" height="8" viewBox="0 0 11 8"><path d="M0.5 4 C2 1 4 0.5 5.5 0.5 C7 0.5 9 1 10.5 4 C9 7 7 7.5 5.5 7.5 C4 7.5 2 7 0.5 4 Z" fill="#bdbdbd"/><circle cx="5.5" cy="4" r="1.8" fill="#2d2d2d"/></svg>
<svg style="left:22px;top:514px" width="12" height="12" viewBox="0 0 12 12"><path d="M0 4 H2.5 L6 1 V11 L2.5 8 H0 Z" fill="#bdbdbd"/><path d="M8 3.5 A3.5 3.5 0 0 1 8 8.5 M9.5 2 A5.5 5.5 0 0 1 9.5 10" fill="none" stroke="#bdbdbd" stroke-width="1.1"/></svg>
<div class="a" style="left:39px;top:516px;width:7px;height:7px;border-radius:50%;background:#bdbdbd"></div>
<svg style="left:53px;top:513px" width="10" height="12" viewBox="0 0 10 12"><path d="M2.5 5.5 V3.5 A2.5 2.5 0 0 1 7.5 3.5 V5.5" fill="none" stroke="#bdbdbd" stroke-width="1.3"/><rect x="0.5" y="5.5" width="9" height="6" fill="#bdbdbd"/><rect x="4.4" y="7" width="1.2" height="3" fill="#2d2d2d"/></svg>
<div class="sep" style="left:70px;top:514px;height:12px;background:#1a1a1a"></div>
<svg style="left:83px;top:512px" width="13" height="13" viewBox="0 0 13 13"><path d="M1 1 H6.5 L12 6.5 L6.5 12 L1 6.5 Z" fill="#bdbdbd"/><circle cx="4" cy="4" r="1.2" fill="#2d2d2d"/></svg>
<div class="sep" style="left:101px;top:514px;height:12px;background:#1a1a1a"></div>
<div class="t" style="left:107px;top:515px;font-size:10px;color:#a0a0a0">#</div>
<div class="t" style="left:122px;top:515px;font-size:10px;color:#a0a0a0">.</div>
<div class="sep" style="left:134px;top:514px;height:12px;background:#1a1a1a"></div>
<div class="t" style="left:140px;top:515px;font-size:9px;color:#a3a3a3">Source Name</div>
<div class="sep" style="left:264px;top:514px;height:12px;background:#1a1a1a"></div>
<svg style="left:268px;top:514px" width="15" height="11" viewBox="0 0 15 11"><path d="M3 6 C3 2.5 5 0.8 7.5 0.8 C10 0.8 12 2.5 12 6 Z" fill="#c4c4c4"/><circle cx="5.8" cy="3.8" r="1" fill="#2d2d2d"/><circle cx="9.2" cy="3.8" r="1" fill="#2d2d2d"/><rect x="6.7" y="5" width="1.6" height="5.5" fill="#c4c4c4"/><path d="M0.5 7.5 H14.5" stroke="#c4c4c4" stroke-width="1.2"/></svg>
<svg style="left:285px;top:513px" width="11" height="11" viewBox="0 0 11 11"><circle cx="5.5" cy="5.5" r="2.2" fill="none" stroke="#c4c4c4" stroke-width="1.2"/><path d="M5.5 0 V2.5 M5.5 8.5 V11 M0 5.5 H2.5 M8.5 5.5 H11 M1.8 1.8 L3.4 3.4 M7.6 7.6 L9.2 9.2 M1.8 9.2 L3.4 7.6 M7.6 3.4 L9.2 1.8" stroke="#c4c4c4" stroke-width="1"/></svg>
<svg style="left:300px;top:513px" width="11" height="11" viewBox="0 0 11 11"><path d="M1 1 L10 10" stroke="#c4c4c4" stroke-width="1.5" stroke-dasharray="1.3 0.9"/></svg>
<div class="t" style="left:314px;top:513px;font-style:italic;font-size:13px;color:#c4c4c4;letter-spacing:-0.5px">fx</div>
<svg style="left:329px;top:514px" width="12" height="11" viewBox="0 0 13 12"><path d="M0.6 1 V11.4 H11" fill="none" stroke="#c4c4c4" stroke-width="1.1"/><rect x="2.5" y="0.5" width="10" height="9" fill="#c4c4c4"/><path d="M3.7 1 V9 M11.3 1 V9" stroke="#2d2d2d" stroke-width="0.9" stroke-dasharray="1 1"/><rect x="5.5" y="4.5" width="4" height="1.2" fill="#2d2d2d"/><rect x="4.6" y="1.5" width="0.3" height="7" fill="#c4c4c4"/></svg>
<svg style="left:345px;top:513px" width="12" height="12" viewBox="0 0 13 13"><path d="M3 5.5 A4.5 4.5 0 1 0 7.5 10" fill="none" stroke="#c4c4c4" stroke-width="1"/><path d="M4.3 4 A4.5 4.5 0 1 0 9 8.7" fill="#2d2d2d" stroke="#c4c4c4" stroke-width="1"/><circle cx="8" cy="5" r="4.5" fill="#777" stroke="#c4c4c4" stroke-width="1"/></svg>
<svg style="left:360px;top:513px" width="11" height="11" viewBox="0 0 11 11"><circle cx="5.5" cy="5.5" r="4.8" fill="#2d2d2d" stroke="#c4c4c4" stroke-width="1.1"/><path d="M8.9 2.1 A4.8 4.8 0 0 1 2.1 8.9 Z" fill="#c4c4c4"/></svg>
<svg style="left:375px;top:512px" width="12" height="13" viewBox="0 0 12 13"><path d="M6 1 L11 3.5 L11 9.5 L6 12 L1 9.5 L1 3.5 Z M1 3.5 L6 6 L11 3.5 M6 6 V12" fill="none" stroke="#c4c4c4" stroke-width="1.1" stroke-linejoin="round"/></svg>
<div class="sep" style="left:401px;top:514px;height:12px;background:#1a1a1a"></div>
<div class="t" style="left:407px;top:515px;font-size:9px;color:#a3a3a3">Parent &amp; Link</div>
<div class="sep" style="left:518px;top:514px;height:12px;background:#1a1a1a"></div>
<div class="a" style="left:2px;top:527px;width:532px;height:1px;background:#0d0d0d"></div>

<div class="a" style="left:534px;top:508px;width:1px;height:177px;background:#000"></div>
<div class="a" style="left:535px;top:478px;width:813px;height:1px;background:#111"></div>
<div class="a" style="left:541px;top:479px;width:800px;height:8px;background:#6b6b6b"></div>
<svg style="left:535px;top:478px" width="7" height="10" viewBox="0 0 7 10"><path d="M7 0 V10 H5 C2 10 0 8 0 5 C0 2 2 0 5 0 Z" fill="#2f8fe8"/></svg>
<svg style="left:1341px;top:478px" width="7" height="10" viewBox="0 0 7 10"><path d="M0 0 V10 H2 C5 10 7 8 7 5 C7 2 5 0 2 0 Z" fill="#2f8fe8"/></svg>
<div class="a" style="left:635px;top:479px;width:1px;height:8px;background:#5aa7ee"></div>
<div class="a" style="left:535px;top:487px;width:813px;height:1px;background:#111"></div>
<div class="a" style="left:542px;top:502px;width:1px;height:4px;background:#9a9a9a"></div>
<div class="a" style="left:535px;top:488px;width:20px;height:14px;overflow:hidden"><div class="t" style="left:-4px;top:3px;font-size:9.5px;color:#b0b0b0">0:00s</div></div>
<div class="a" style="left:596px;top:502px;width:1px;height:4px;background:#9a9a9a"></div>
<div class="t" style="left:584px;top:491px;font-size:9.5px;color:#b0b0b0;width:22px;text-align:center">02s</div>
<div class="a" style="left:649px;top:502px;width:1px;height:4px;background:#9a9a9a"></div>
<div class="t" style="left:637px;top:491px;font-size:9.5px;color:#b0b0b0;width:22px;text-align:center">04s</div>
<div class="a" style="left:702px;top:502px;width:1px;height:4px;background:#9a9a9a"></div>
<div class="t" style="left:690px;top:491px;font-size:9.5px;color:#b0b0b0;width:22px;text-align:center">06s</div>
<div class="a" style="left:755px;top:502px;width:1px;height:4px;background:#9a9a9a"></div>
<div class="t" style="left:743px;top:491px;font-size:9.5px;color:#b0b0b0;width:22px;text-align:center">08s</div>
<div class="a" style="left:808px;top:502px;width:1px;height:4px;background:#9a9a9a"></div>
<div class="t" style="left:796px;top:491px;font-size:9.5px;color:#b0b0b0;width:22px;text-align:center">10s</div>
<div class="a" style="left:862px;top:502px;width:1px;height:4px;background:#9a9a9a"></div>
<div class="t" style="left:850px;top:491px;font-size:9.5px;color:#b0b0b0;width:22px;text-align:center">12s</div>
<div class="a" style="left:915px;top:502px;width:1px;height:4px;background:#9a9a9a"></div>
<div class="t" style="left:903px;top:491px;font-size:9.5px;color:#b0b0b0;width:22px;text-align:center">14s</div>
<div class="a" style="left:968px;top:502px;width:1px;height:4px;background:#9a9a9a"></div>
<div class="t" style="left:956px;top:491px;font-size:9.5px;color:#b0b0b0;width:22px;text-align:center">16s</div>
<div class="a" style="left:1021px;top:502px;width:1px;height:4px;background:#9a9a9a"></div>
<div class="t" style="left:1009px;top:491px;font-size:9.5px;color:#b0b0b0;width:22px;text-align:center">18s</div>
<div class="a" style="left:1074px;top:502px;width:1px;height:4px;background:#9a9a9a"></div>
<div class="t" style="left:1062px;top:491px;font-size:9.5px;color:#b0b0b0;width:22px;text-align:center">20s</div>
<div class="a" style="left:1128px;top:502px;width:1px;height:4px;background:#9a9a9a"></div>
<div class="t" style="left:1116px;top:491px;font-size:9.5px;color:#b0b0b0;width:22px;text-align:center">22s</div>
<div class="a" style="left:1181px;top:502px;width:1px;height:4px;background:#9a9a9a"></div>
<div class="t" style="left:1169px;top:491px;font-size:9.5px;color:#b0b0b0;width:22px;text-align:center">24s</div>
<div class="a" style="left:1234px;top:502px;width:1px;height:4px;background:#9a9a9a"></div>
<div class="t" style="left:1222px;top:491px;font-size:9.5px;color:#b0b0b0;width:22px;text-align:center">26s</div>
<div class="a" style="left:1287px;top:502px;width:1px;height:4px;background:#9a9a9a"></div>
<div class="t" style="left:1275px;top:491px;font-size:9.5px;color:#b0b0b0;width:22px;text-align:center">28s</div>
<div class="a" style="left:1340px;top:502px;width:1px;height:4px;background:#9a9a9a"></div>
<div class="t" style="left:1328px;top:491px;font-size:9.5px;color:#b0b0b0;width:22px;text-align:center">30s</div>
<div class="a" style="left:535px;top:507px;width:813px;height:1px;background:#111"></div>
<div class="a" style="left:535px;top:508px;width:813px;height:19px;background:#262626"></div>
<div class="a" style="left:541px;top:508px;width:800px;height:15px;background:#6b6b6b"></div>
<svg style="left:535px;top:508px" width="6" height="15" viewBox="0 0 6 15"><path d="M6 0 V15 H5 C2 15 0 13 0 10 V5 C0 2 2 0 5 0 Z" fill="#2f8fe8"/></svg>
<svg style="left:1341px;top:508px" width="6" height="15" viewBox="0 0 6 15"><path d="M0 0 V15 H1 C4 15 6 13 6 10 V5 C6 2 4 0 1 0 Z" fill="#2f8fe8"/></svg>
<div class="a" style="left:535px;top:523px;width:813px;height:1px;background:#111"></div>
<div class="a" style="left:542px;top:524px;width:798px;height:3px;background:#16c41e"></div>
<div class="a" style="left:535px;top:527px;width:828px;height:1px;background:#0d0d0d"></div>
<div class="a" style="left:535px;top:528px;width:7px;height:157px;background:#272727"></div>
<div class="a" style="left:542px;top:528px;width:798px;height:157px;background:#343434"></div>
<div class="a" style="left:1340px;top:528px;width:7px;height:157px;background:#272727"></div>
<div class="a" style="left:535px;top:535px;width:805px;height:1px;background:#202020"></div>
<div class="a" style="left:535px;top:552px;width:805px;height:1px;background:#202020"></div>
<div class="a" style="left:535px;top:569px;width:805px;height:1px;background:#202020"></div>
<div class="a" style="left:535px;top:586px;width:805px;height:1px;background:#202020"></div>
<div class="a" style="left:535px;top:603px;width:805px;height:1px;background:#202020"></div>
<div class="a" style="left:535px;top:620px;width:805px;height:1px;background:#202020"></div>
<div class="a" style="left:535px;top:637px;width:805px;height:1px;background:#202020"></div>
<div class="a" style="left:535px;top:654px;width:805px;height:1px;background:#202020"></div>
<div class="a" style="left:535px;top:671px;width:805px;height:1px;background:#202020"></div>
<div class="a" style="left:1347px;top:527px;width:1px;height:18px;background:#000"></div>
<div class="a" style="left:631px;top:528px;width:9px;height:7px;overflow:hidden"><svg style="left:1px;top:-6px" width="8" height="12" viewBox="0 0 8 12"><path d="M0 0.7 H3 M4 0.7 H7 M0 11.3 H3 M4 11.3 H7 M2.5 0 V12 M4.5 0 V12" stroke="#c0c0c0" stroke-width="1.3" fill="none"/></svg></div>
<svg style="left:632px;top:539px" width="8" height="11" viewBox="0 0 8 11"><path d="M0 0.7 H3 M4 0.7 H7 M0 10.3 H3 M4 10.3 H7 M2.5 0 V11 M4.5 0 V11" stroke="#c0c0c0" stroke-width="1.3" fill="none"/></svg>
<svg style="left:632px;top:556px" width="8" height="11" viewBox="0 0 8 11"><path d="M0 0.7 H3 M4 0.7 H7 M0 10.3 H3 M4 10.3 H7 M2.5 0 V11 M4.5 0 V11" stroke="#c0c0c0" stroke-width="1.3" fill="none"/></svg>
<svg style="left:632px;top:573px" width="8" height="11" viewBox="0 0 8 11"><path d="M0 0.7 H3 M4 0.7 H7 M0 10.3 H3 M4 10.3 H7 M2.5 0 V11 M4.5 0 V11" stroke="#c0c0c0" stroke-width="1.3" fill="none"/></svg>
<svg style="left:632px;top:590px" width="8" height="11" viewBox="0 0 8 11"><path d="M0 0.7 H3 M4 0.7 H7 M0 10.3 H3 M4 10.3 H7 M2.5 0 V11 M4.5 0 V11" stroke="#c0c0c0" stroke-width="1.3" fill="none"/></svg>
<svg style="left:632px;top:624px" width="8" height="11" viewBox="0 0 8 11"><path d="M0 0.7 H3 M4 0.7 H7 M0 10.3 H3 M4 10.3 H7 M2.5 0 V11 M4.5 0 V11" stroke="#c0c0c0" stroke-width="1.3" fill="none"/></svg>
<svg style="left:632px;top:641px" width="8" height="11" viewBox="0 0 8 11"><path d="M0 0.7 H3 M4 0.7 H7 M0 10.3 H3 M4 10.3 H7 M2.5 0 V11 M4.5 0 V11" stroke="#c0c0c0" stroke-width="1.3" fill="none"/></svg>
<svg style="left:632px;top:658px" width="8" height="11" viewBox="0 0 8 11"><path d="M0 0.7 H3 M4 0.7 H7 M0 10.3 H3 M4 10.3 H7 M2.5 0 V11 M4.5 0 V11" stroke="#c0c0c0" stroke-width="1.3" fill="none"/></svg>
<svg style="left:632px;top:675px" width="8" height="13" viewBox="0 0 8 13"><path d="M0 0.7 H3 M4 0.7 H7 M0 12.3 H3 M4 12.3 H7 M2.5 0 V13 M4.5 0 V13" stroke="#c0c0c0" stroke-width="1.3" fill="none"/></svg>
<svg style="left:538px;top:608px" width="9" height="9" viewBox="0 0 9 9"><path d="M4.5 0 L9 4.5 L4.5 9 L0 4.5 Z" fill="#1f70d0"/></svg>
<div class="a" style="left:635px;top:493px;width:1px;height:192px;background:#3a95ef"></div>
<svg style="left:630px;top:492px" width="11" height="15" viewBox="0 0 11 15"><path d="M0 1 C0 0.4 0.4 0 1 0 H10 C10.6 0 11 0.4 11 1 V7 L5.5 14 L0 7 Z" fill="#3a95ef"/><path d="M4 7 H7 M5.5 7 V10" stroke="#1a1a1a" stroke-width="1"/></svg>
<svg style="left:1351px;top:512px" width="11" height="14" viewBox="0 0 11 14"><path d="M0 0 H11 V8 L5.5 14 L0 8 Z" fill="#b5b5b5"/></svg>
<div class="a" style="left:1347px;top:527px;width:16px;height:1px;background:#0d0d0d"></div>
<svg style="left:1348px;top:530px" width="15" height="14" viewBox="0 0 15 14"><path d="M1 8 L6 1 L8 5" fill="none" stroke="#b5b5b5" stroke-width="1"/><rect x="7" y="5" width="7" height="5" fill="#b5b5b5"/><circle cx="6" cy="10" r="2.8" fill="#232323" stroke="#b5b5b5" stroke-width="1.1"/></svg>
<div class="a" style="left:1348px;top:545px;width:15px;height:140px;background:#1d1d1d"></div>
<div class="a" style="left:1349px;top:576px;width:14px;height:105px;background:#2c2c2c;border-radius:7px"></div>
<div class="t" style="left:1055px;top:629px;font-size:19.8px;color:#808080">Activate Windows</div>
<div class="t" style="left:1055px;top:654px;font-size:14.6px;color:#808080">Go to PC settings to activate Windows.</div>
<div class="a" style="left:2px;top:686px;width:1361px;height:12px;background:#232323"></div>
<div class="a" style="left:5px;top:687px;width:17px;height:11px;background:#1c1c1c;border:1px solid #2c2c2c;border-bottom:none;border-radius:2px 2px 0 0"></div>
<svg style="left:8px;top:689px" width="12" height="10" viewBox="0 0 12 10"><rect x="0.5" y="0.5" width="7" height="7" fill="none" stroke="#2f8fe8" stroke-width="1.1"/><rect x="2.5" y="2.5" width="7" height="7" fill="#232323" stroke="#2f8fe8" stroke-width="1.1"/><rect x="4.5" y="4.5" width="7" height="7" fill="#232323" stroke="#2f8fe8" stroke-width="1.1"/></svg>
<svg style="left:26px;top:689px" width="12" height="10" viewBox="0 0 12 10"><circle cx="4.5" cy="4.5" r="3.5" fill="none" stroke="#bdbdbd" stroke-width="1.1"/><rect x="5.5" y="5" width="5.5" height="6" fill="none" stroke="#bdbdbd" stroke-width="1.1"/></svg>
<svg style="left:44px;top:689px" width="12" height="10" viewBox="0 0 12 10"><path d="M4 0 H8 V3 L11 5.5 L8 8 V10 H4 V8 L1 5.5 L4 3 Z" fill="#8a8a8a"/></svg>
<div class="a" style="left:267px;top:686px;width:133px;height:13px;background:#1e1e1e;border:1px solid #2e2e2e;border-bottom:none;border-radius:3px 3px 0 0"></div>
<div class="t" style="left:273px;top:688px;color:#b5b5b5">Toggle Switches / Modes</div>
<svg style="left:540px;top:690px" width="10" height="6" viewBox="0 0 10 6"><path d="M0 5.5 L3 3 L4.5 4 L7 0.5 L10 5.5 Z" fill="#aaa"/></svg>
<div class="a" style="left:569px;top:692px;width:40px;height:2px;background:#3a3a3a"></div>
<div class="a" style="left:561px;top:690px;width:10px;height:10px;border-radius:50%;border:1.6px solid #aaa;background:#2a2a2a"></div>
<svg style="left:621px;top:690px" width="16" height="8" viewBox="0 0 16 8"><path d="M0 7 L4 3 L5 4 L3 7 Z" fill="#aaa"/><path d="M4.5 7 L10 0.5 L16 7 Z" fill="#bbb"/></svg></body></html>
